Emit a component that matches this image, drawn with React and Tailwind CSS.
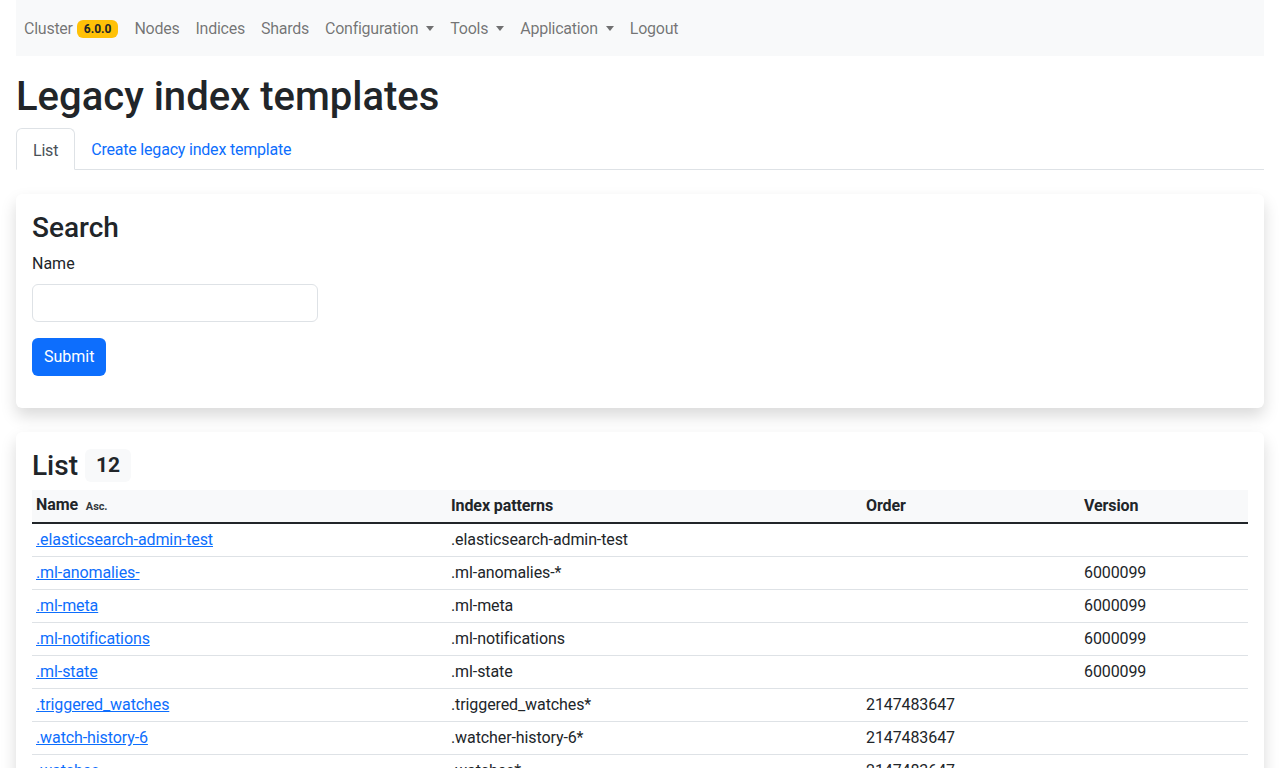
import React, { useState } from "react";

const navItems = [
  { label: "Nodes" },
  { label: "Indices" },
  { label: "Shards" },
  { label: "Configuration", dropdown: true },
  { label: "Tools", dropdown: true },
  { label: "Application", dropdown: true },
  { label: "Logout" },
];

const templates = [
  { name: ".elasticsearch-admin-test", patterns: ".elasticsearch-admin-test", order: "", version: "" },
  { name: ".ml-anomalies-", patterns: ".ml-anomalies-*", order: "", version: "6000099" },
  { name: ".ml-meta", patterns: ".ml-meta", order: "", version: "6000099" },
  { name: ".ml-notifications", patterns: ".ml-notifications", order: "", version: "6000099" },
  { name: ".ml-state", patterns: ".ml-state", order: "", version: "6000099" },
  { name: ".triggered_watches", patterns: ".triggered_watches*", order: "2147483647", version: "" },
  { name: ".watch-history-6", patterns: ".watcher-history-6*", order: "2147483647", version: "" },
  { name: ".watches", patterns: ".watches*", order: "2147483647", version: "" },
  { name: "logstash", patterns: "logstash-*", order: "0", version: "60001" },
  { name: "security-index-template", patterns: ".security-*", order: "1000", version: "" },
  { name: "security_audit_log", patterns: ".security_audit_log*", order: "2147483647", version: "" },
  { name: "watch_history_audit", patterns: ".watch_history*", order: "0", version: "" },
];

function Caret() {
  return (
    <span className="ml-[8px] inline-block border-t-[5px] border-x-[4px] border-b-0 border-t-current border-x-transparent" />
  );
}

function Navbar() {
  return (
    <nav className="flex items-center h-14 pt-px px-2 bg-[#f8f9fa] tracking-[-0.25px]">
      <a href="#" className="flex items-center text-[rgba(0,0,0,0.55)] pr-2">
        Cluster
        <span className="ml-1 rounded-[6px] bg-[#ffc107] text-[#212529] text-[12px] font-bold leading-none tracking-normal px-[7px] py-[3px]">
          6.0.0
        </span>
      </a>
      {navItems.map((item) => (
        <a key={item.label} href="#" className="px-2 text-[rgba(0,0,0,0.55)] flex items-center">
          {item.label}
          {item.dropdown && <Caret />}
        </a>
      ))}
    </nav>
  );
}

function SearchCard() {
  const [name, setName] = useState("");
  return (
    <div className="mt-6 bg-white rounded-[6px] shadow-[0_8px_16px_rgba(0,0,0,0.15)] p-4">
      <h3 className="text-[28px] font-medium leading-[1.2] pt-px mb-2">Search</h3>
      <label className="block mb-2 -mt-px">Name</label>
      <input
        value={name}
        onChange={(e) => setName(e.target.value)}
        className="block w-[286px] h-[38px] mb-4 px-3 border border-[#dee2e6] rounded-[6px] outline-none"
      />
      <button className="mb-4 h-[38px] px-3 rounded-[6px] bg-[#0d6efd] text-white">
        Submit
      </button>
    </div>
  );
}

function ListCard() {
  return (
    <div className="mt-6 bg-white rounded-[6px] shadow-[0_8px_16px_rgba(0,0,0,0.15)] p-4">
      <h3 className="flex items-center text-[28px] font-medium leading-[1.2] pt-px mb-2">
        List
        <span className="ml-[7px] rounded-[6px] bg-[#f8f9fa] text-[#212529] text-[21px] font-bold leading-none px-[11px] py-[6px]">
          12
        </span>
      </h3>
      <table className="w-full table-fixed border-collapse tracking-[-0.1px]">
        <colgroup>
          <col className="w-[415px]" />
          <col className="w-[415px]" />
          <col className="w-[218px]" />
          <col />
        </colgroup>
        <thead>
          <tr className="bg-[#f8f9fa] border-b-2 border-[#212529] text-left">
            <th className="px-1 pt-[3px] pb-[3px] font-bold">
              Name <span className="ml-[4px] text-[11px] font-bold text-[#343a40]">Asc.</span>
            </th>
            <th className="px-1 pt-[3px] pb-[3px] font-bold">Index patterns</th>
            <th className="px-1 pt-[3px] pb-[3px] font-bold">Order</th>
            <th className="px-1 pt-[3px] pb-[3px] font-bold">Version</th>
          </tr>
        </thead>
        <tbody>
          {templates.map((t) => (
            <tr key={t.name} className="border-b border-[#dee2e6]">
              <td className="px-1 py-1">
                <a href="#" className="text-[#0d6efd] underline">{t.name}</a>
              </td>
              <td className="px-1 py-1">{t.patterns}</td>
              <td className="px-1 py-1">{t.order}</td>
              <td className="px-1 py-1">{t.version}</td>
            </tr>
          ))}
        </tbody>
      </table>
    </div>
  );
}

export default function App() {
  return (
    <div className="min-h-screen bg-white text-[#212529] text-base leading-6 font-['Roboto',sans-serif] px-4 pb-8">
      <Navbar />
      <h1 className="text-[40px] font-medium leading-[1.2] mt-[17px] mb-[7px]">Legacy index templates</h1>
      <div className="flex border-b border-[#dee2e6] tracking-[-0.2px]">
        <a href="#" className="-mb-px px-4 pt-[10px] pb-[6px] border border-[#dee2e6] border-b-white rounded-t-[6px] bg-white text-[#495057]">
          List
        </a>
        <a href="#" className="px-4 pt-[10px] pb-[6px] text-[#0d6efd]">
          Create legacy index template
        </a>
      </div>
      <SearchCard />
      <ListCard />
    </div>
  );
}
